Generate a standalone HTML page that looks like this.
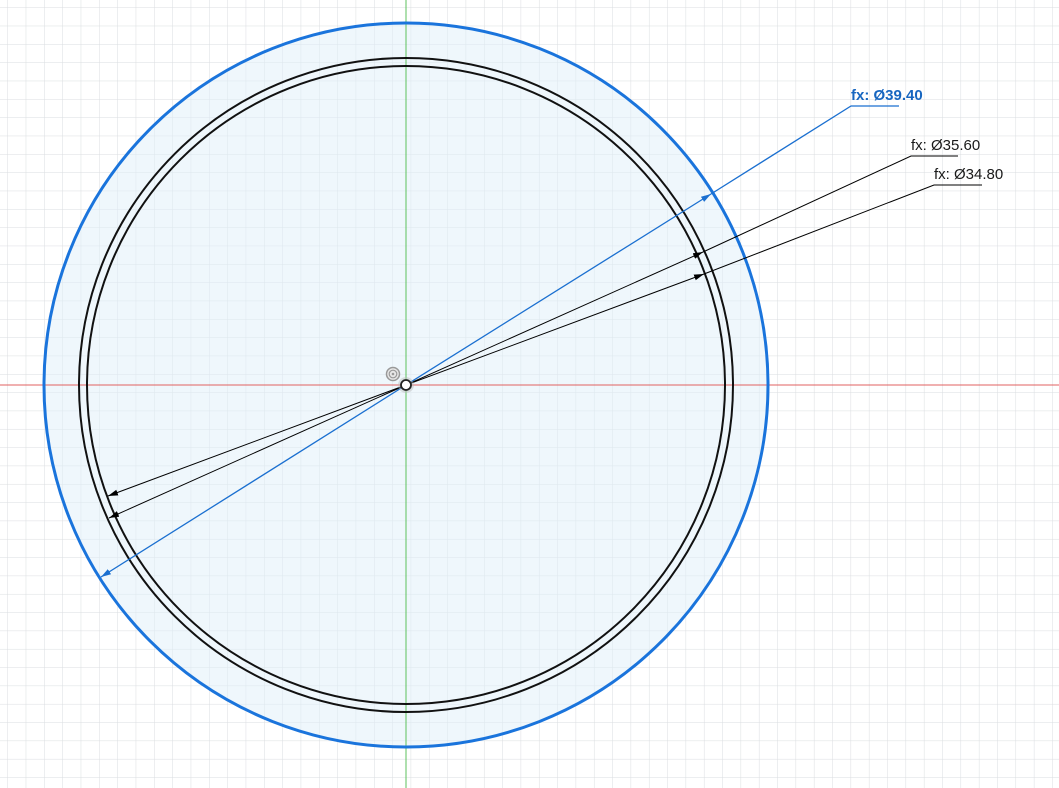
<!DOCTYPE html>
<html><head><meta charset="utf-8"><style>
html,body{margin:0;padding:0;background:#fff;width:1059px;height:788px;overflow:hidden}
svg{display:block}
text{font-family:"Liberation Sans",Arial,sans-serif;font-size:15px}
</style></head><body>
<svg width="1059" height="788" viewBox="0 0 1059 788" xmlns="http://www.w3.org/2000/svg">
<defs>
<pattern id="g" x="7.4" y="7.4" width="18.33" height="18.33" patternUnits="userSpaceOnUse">
<path d="M0 0H18.33M0 0V18.33" stroke="#dadde0" stroke-width="1" fill="none"/>
</pattern>
<marker id="ab" viewBox="0 0 10 6" refX="10" refY="3" markerWidth="10" markerHeight="6" orient="auto" markerUnits="userSpaceOnUse"><path d="M0 0L10 3L0 6z" fill="#000"/></marker>
<marker id="abl" viewBox="0 0 10 6" refX="10" refY="3" markerWidth="10" markerHeight="6" orient="auto" markerUnits="userSpaceOnUse"><path d="M0 0L10 3L0 6z" fill="#1a6fd0"/></marker>
</defs>
<rect width="1059" height="788" fill="#fff"/>
<rect width="1059" height="788" fill="url(#g)"/>
<circle cx="406" cy="385" r="362" fill="#e0f0fa" fill-opacity="0.5"/>
<line x1="0" y1="385" x2="1059" y2="385" stroke="#e06060" stroke-width="1"/>
<line x1="406" y1="0" x2="406" y2="788" stroke="#5cc05c" stroke-width="1"/>
<circle cx="406" cy="385" r="362" fill="none" stroke="#1a74dc" stroke-width="3"/>
<circle cx="406" cy="385" r="327" fill="none" stroke="#111" stroke-width="2"/>
<circle cx="406" cy="385" r="319" fill="none" stroke="#111" stroke-width="2"/>
<line x1="406" y1="385" x2="101" y2="577" stroke="#1a6fd0" stroke-width="1.3" marker-end="url(#abl)"/>
<line x1="406" y1="385" x2="711" y2="194" stroke="#1a6fd0" stroke-width="1.3" marker-end="url(#abl)"/>
<polyline points="711,194 851,106 899,106" fill="none" stroke="#1a6fd0" stroke-width="1.3"/>
<text x="851" y="100" fill="#1766c0" font-weight="600">fx: Ø39.40</text>
<line x1="406" y1="385" x2="109" y2="518" stroke="#000" stroke-width="1" marker-end="url(#ab)"/>
<line x1="406" y1="385" x2="703" y2="252" stroke="#000" stroke-width="1" marker-end="url(#ab)"/>
<polyline points="703,252 911,156 958,156" fill="none" stroke="#000" stroke-width="1"/>
<text x="911" y="150" fill="#1a1a1a">fx: Ø35.60</text>
<line x1="406" y1="385" x2="108" y2="496" stroke="#000" stroke-width="1" marker-end="url(#ab)"/>
<line x1="406" y1="385" x2="704" y2="274" stroke="#000" stroke-width="1" marker-end="url(#ab)"/>
<polyline points="704,274 934,185 982,185" fill="none" stroke="#000" stroke-width="1"/>
<text x="934" y="179" fill="#1a1a1a">fx: Ø34.80</text>
<circle cx="393" cy="374" r="6.5" fill="#e8e8e8" stroke="#999" stroke-width="1.5"/>
<circle cx="393" cy="374" r="3.8" fill="none" stroke="#999" stroke-width="1.2"/>
<circle cx="393" cy="374" r="1.3" fill="#999"/>
<circle cx="406" cy="385" r="8" fill="#bbb" fill-opacity="0.45"/>
<circle cx="406" cy="385" r="5" fill="#fff" stroke="#222" stroke-width="1.8"/>
</svg>
</body></html>
